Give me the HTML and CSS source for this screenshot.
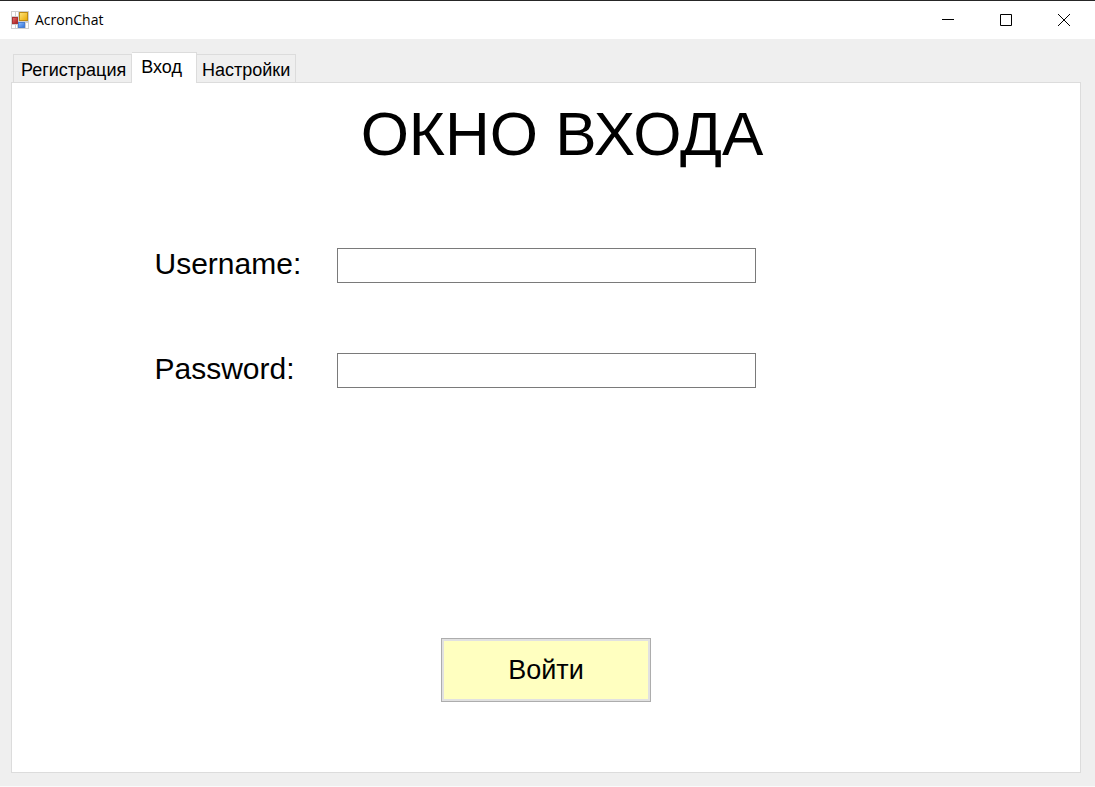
FILE: index.html
```html
<!DOCTYPE html>
<html lang="ru">
<head>
<meta charset="utf-8">
<title>AcronChat</title>
<link rel="stylesheet" href="styles.css">
</head>
<body>
<div class="window">
  <header class="titlebar">
    <svg class="app-icon" viewBox="0 0 18 18" aria-hidden="true">
      <defs>
        <linearGradient id="gold" x2="1" y2="1"><stop stop-color="#ffe680"/><stop offset="1" stop-color="#e8a800"/></linearGradient>
        <linearGradient id="red" x2="1" y2="1"><stop stop-color="#e87070"/><stop offset="1" stop-color="#a81818"/></linearGradient>
        <linearGradient id="blue" x2="1" y2="1"><stop stop-color="#8fc0ff"/><stop offset="1" stop-color="#2f6fd8"/></linearGradient>
      </defs>
      <rect width="18" height="18" fill="#cfcfcf"/>
      <path d="M1 1h3v4H1zM5 1h2v4H5zM1 14h3v3H1zM5 14h1v3H5zM15 12h2v5h-2z" fill="#fff"/>
      <rect x="8.500" y="1.500" width="8" height="8" fill="url(#gold)" stroke="#bd8b13"/>
      <rect x="1.500" y="6.500" width="5" height="6" fill="url(#red)" stroke="#a93232"/>
      <rect x="7.500" y="11.500" width="6" height="5" fill="url(#blue)" stroke="#4a7fd0"/>
    </svg>
    <h1 class="app-title">AcronChat</h1>
    <div class="window-controls">
      <button class="control" type="button" aria-label="Свернуть"><svg class="glyph" viewBox="0 0 12 12"><path d="M0 5.500h12"/></svg></button>
      <button class="control" type="button" aria-label="Развернуть"><svg class="glyph" viewBox="0 0 12 12"><path d="M.5.5h11v11H.5z"/></svg></button>
      <button class="control" type="button" aria-label="Закрыть"><svg class="glyph" viewBox="0 0 12 12"><path d="M0 0l12 12M12 0L0 12"/></svg></button>
    </div>
  </header>
  <main class="content">
    <div class="tabs" role="tablist">
      <button class="tab" type="button" role="tab" aria-selected="false">Регистрация</button>
      <button class="tab tab-active" type="button" role="tab" aria-selected="true">Вход</button>
      <button class="tab" type="button" role="tab" aria-selected="false">Настройки</button>
    </div>
    <form class="panel" role="tabpanel">
      <h2 class="heading">ОКНО ВХОДА</h2>
      <div class="fields">
        <label class="label" for="username">Username:</label>
        <input class="field" id="username" type="text">
        <label class="label" for="password">Password:</label>
        <input class="field" id="password" type="password">
      </div>
      <button class="submit" type="submit">Войти</button>
    </form>
  </main>
</div>
</body>
</html>
```
FILE: styles.css
```css
* { box-sizing: border-box; }
body {
  margin: 0;
  background: #efefef;
  color: #000;
  font-family: "Liberation Sans", Arial, sans-serif;
}
button { font: inherit; color: inherit; }
.window {
  display: flex;
  flex-direction: column;
  min-height: 100vh;
  border-bottom: 1px solid #fafafa;
}
.titlebar {
  display: flex;
  align-items: center;
  height: 39px;
  padding: 0 2px 0 11px;
  background: #fff;
  border-top: 1px solid #262626;
}
.app-icon { width: 18px; height: 18px; }
.app-title {
  margin: 0 auto 0 6px;
  font: 400 14px/20px "Open Sans", "Noto Sans", sans-serif;
}
.window-controls { display: flex; }
.control {
  display: grid;
  place-items: center;
  width: 58px;
  height: 38px;
  padding: 0;
  border: 0;
  background: none;
}
.glyph {
  width: 12px;
  height: 12px;
  fill: none;
  stroke: #000;
}
.content {
  flex: 1;
  display: flex;
  flex-direction: column;
  padding: 13px 14px 13px 11px;
}
.tabs {
  display: flex;
  align-items: flex-end;
  padding-left: 2px;
}
.tab {
  height: 28px;
  padding: 2px 5px 0 7px;
  border: 1px solid #dcdcdc;
  border-bottom: 0;
  background: #efefef;
  font-size: 18px;
  line-height: 24px;
}
.tab + .tab { border-left: 0; padding-left: 5px; }
.tab.tab-active {
  z-index: 1;
  height: 31px;
  margin-bottom: -1px;
  padding: 0 14px 2px 9px;
  background: #fff;
}
.panel {
  flex: 1;
  display: flex;
  flex-direction: column;
  padding: 18px 20px 70px;
  border: 1px solid #dcdcdc;
  background: #fff;
}
.heading {
  margin: 0;
  padding-left: 32px;
  font-size: 62px;
  font-weight: 400;
  line-height: 66px;
  text-align: center;
}
.fields {
  display: grid;
  grid-template-columns: 182px minmax(100px, 419px);
  row-gap: 70px;
  justify-content: center;
  align-items: center;
  padding-right: 182px;
  margin-top: 81px;
}
.label {
  padding-bottom: 4px;
  font-size: 30px;
  line-height: 30px;
}
.field {
  width: 100%;
  height: 35px;
  padding: 0 4px;
  border: 1px solid #7a7a7a;
  background: #fff;
  font: inherit;
  font-size: 24px;
}
.submit {
  align-self: center;
  width: 210px;
  height: 64px;
  margin-top: auto;
  border: 1px solid #adadad;
  box-shadow: inset 0 0 0 2px #e1e1e1;
  background: #ffffc0;
  font-size: 27px;
}
```
